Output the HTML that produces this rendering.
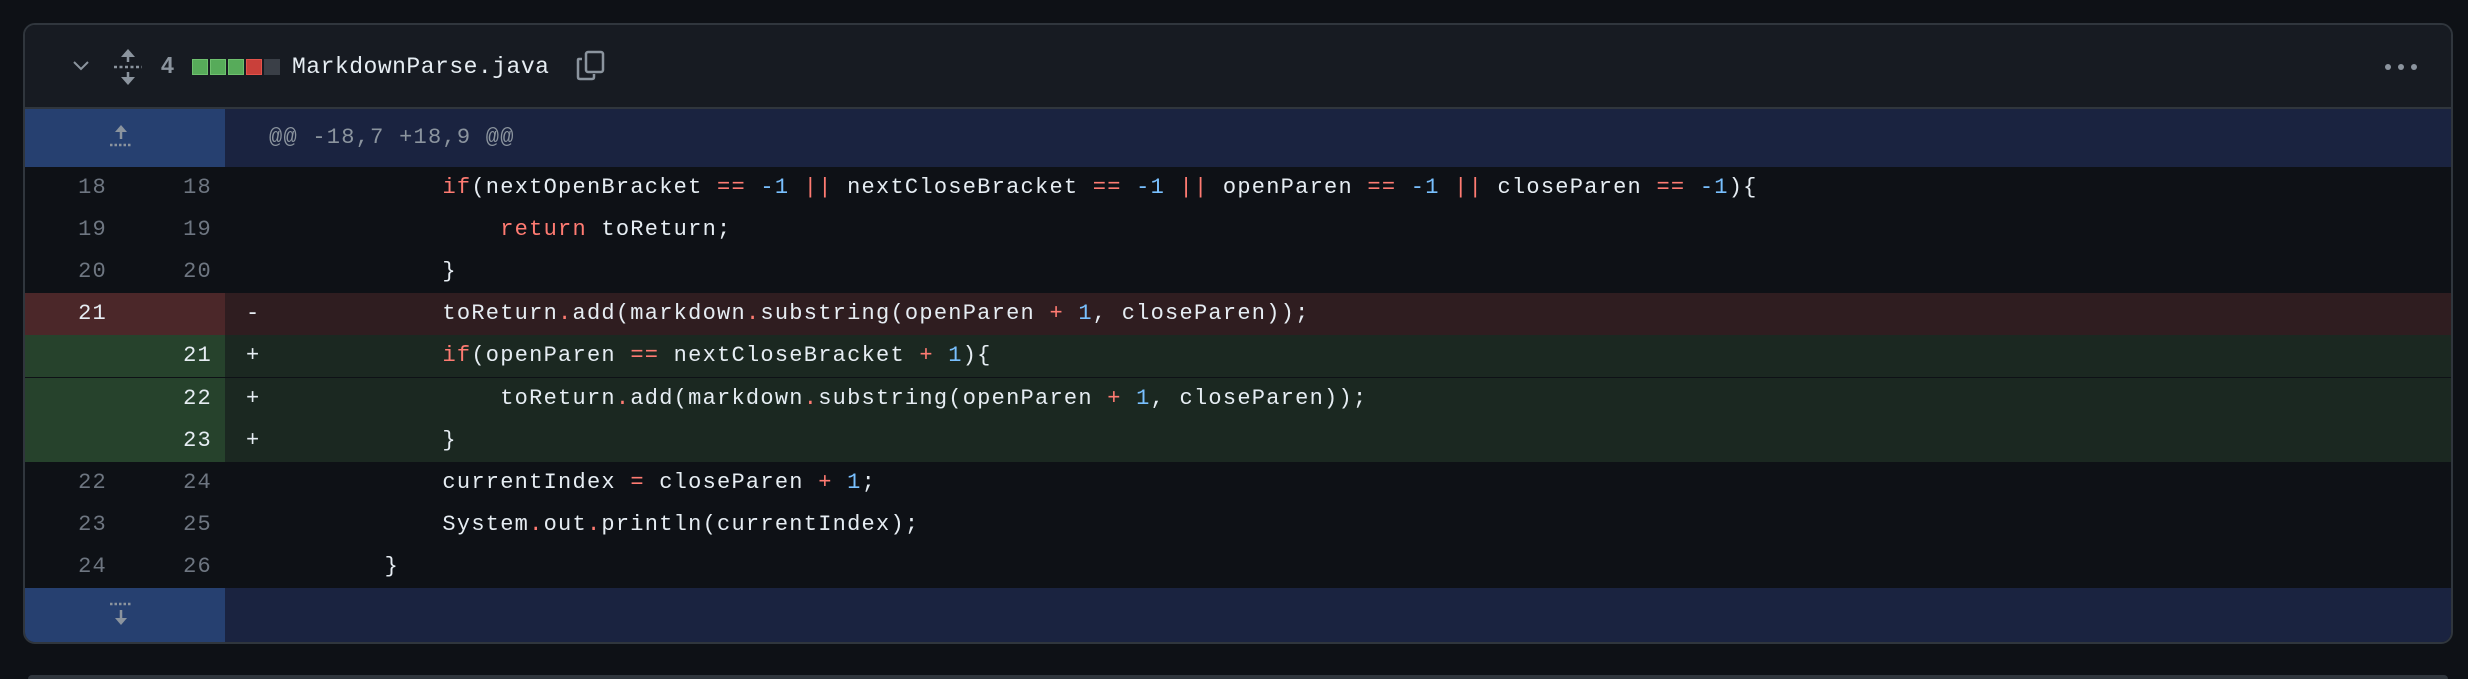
<!DOCTYPE html>
<html><head><meta charset="utf-8"><style>
*{margin:0;padding:0;box-sizing:border-box}
body{width:2468px;height:678px;background:#0e1116;position:relative;overflow:hidden;font-family:"Liberation Mono",monospace}
.box{position:absolute;left:23px;top:23px;width:2430px;height:621px;border:2px solid #30363d;border-radius:12px;overflow:hidden;background:#0e1116}
.hdr{position:absolute;left:0;top:0;width:100%;height:84px;background:#171b22;border-bottom:2px solid #30363d}
.hunk{position:absolute;left:0;height:58px;width:100%;background:#1a2340}
.hunk .n{position:absolute;left:0;top:0;width:200px;height:100%;background:#264070}
.row{position:absolute;left:0;width:100%;height:42.1px;font-size:22px;letter-spacing:1.25px;color:#e6edf3;line-height:42px;white-space:pre}
.row .o,.row .w{position:absolute;top:0;text-align:right;color:#6e7681}
.row .o{left:0;width:82px}.row .w{left:100px;width:87px}
.row .s{position:absolute;left:221px}
.row .c{position:absolute;left:244px}
.del{background:#2f1d20}.del .nb{position:absolute;left:0;top:0;width:200px;height:100%;background:#4b2729}
.add{background:#1b2821}.add .nb{position:absolute;left:0;top:0;width:200px;height:100%;background:#26422c}
.del .o,.del .w,.add .o,.add .w{color:#e6edf3}
.k{color:#ff7b72}.b{color:#79c0ff}
.sq{position:absolute;top:34px;width:16px;height:16px}
.dot{position:absolute;top:39px;width:6px;height:6px;border-radius:50%;background:#8b949e}
</style></head><body>
<div class="box">
 <div class="hdr">
  <svg style="position:absolute;left:46px;top:34px" width="20" height="14" viewBox="0 0 20 14"><path d="M3 3 L10 10 L17 3" fill="none" stroke="#8b949e" stroke-width="2"/></svg>
  <svg style="position:absolute;left:88px;top:22px" width="30" height="40" viewBox="0 0 30 40"><path d="M15 2 L8 10 H22 Z M15 38 L8 30 H22 Z" fill="#8b949e"/><path d="M15 8 V15 M15 25 V32" stroke="#8b949e" stroke-width="2.5"/><path d="M1 20 H29" stroke="#8b949e" stroke-width="2.5" stroke-dasharray="3 2.5"/></svg>
  <div style="position:absolute;left:136px;top:27px;font:bold 23px 'Liberation Sans',sans-serif;color:#8b949e">4</div>
  <div class="sq" style="left:167px;background:#57ab5a;border:1px solid #6fc16f"></div>
  <div class="sq" style="left:185px;background:#57ab5a;border:1px solid #6fc16f"></div>
  <div class="sq" style="left:203px;background:#57ab5a;border:1px solid #6fc16f"></div>
  <div class="sq" style="left:221px;background:#c9403a;border:1px solid #e5534b"></div>
  <div class="sq" style="left:239px;background:#3a3f47"></div>
  <div style="position:absolute;left:267px;top:29px;font-size:23px;color:#e6edf3;letter-spacing:0.5px">MarkdownParse.java</div>
  <svg style="position:absolute;left:551px;top:24px" width="30" height="32" viewBox="0 0 30 32"><path d="M6 10 H3 Q2 10 2 11 V28 Q2 30 4 30 H16 Q18 30 18 28 V25" fill="none" stroke="#8b949e" stroke-width="2.5"/><rect x="10" y="3" width="17" height="20" rx="2" fill="none" stroke="#8b949e" stroke-width="2.5"/></svg>
  <div class="dot" style="left:2360px"></div>
  <div class="dot" style="left:2373px"></div>
  <div class="dot" style="left:2386px"></div>
 </div>
 <div class="hunk" style="top:84px"><div class="n"><svg style="position:absolute;left:84px;top:12px" width="24" height="30" viewBox="0 0 24 30"><path d="M12 4 L6 11 H18 Z" fill="#8b949e"/><path d="M12 10 V18" stroke="#8b949e" stroke-width="2.5"/><path d="M1 24 H23" stroke="#8b949e" stroke-width="2.5" stroke-dasharray="2.5 2"/></svg></div>
  <div style="position:absolute;left:244px;top:0;line-height:58px;font-size:22px;letter-spacing:1.25px;color:#8b949e">@@ -18,7 +18,9 @@</div></div>
 <div class="row" style="top:142px"><span class="o">18</span><span class="w">18</span><span class="c">            <span class="k">if</span>(nextOpenBracket <span class="k">==</span> <span class="b">-1</span> <span class="k">||</span> nextCloseBracket <span class="k">==</span> <span class="b">-1</span> <span class="k">||</span> openParen <span class="k">==</span> <span class="b">-1</span> <span class="k">||</span> closeParen <span class="k">==</span> <span class="b">-1</span>){</span></div>
 <div class="row" style="top:184.1px"><span class="o">19</span><span class="w">19</span><span class="c">                <span class="k">return</span> toReturn;</span></div>
 <div class="row" style="top:226.2px"><span class="o">20</span><span class="w">20</span><span class="c">            }</span></div>
 <div class="row del" style="top:268.3px"><span class="nb"></span><span class="o">21</span><span class="s">-</span><span class="c">            toReturn<span class="k">.</span>add(markdown<span class="k">.</span>substring(openParen <span class="k">+</span> <span class="b">1</span>, closeParen));</span></div>
 <div class="row add" style="top:310.4px"><span class="nb"></span><span class="w">21</span><span class="s">+</span><span class="c">            <span class="k">if</span>(openParen <span class="k">==</span> nextCloseBracket <span class="k">+</span> <span class="b">1</span>){</span></div>
 <div class="row add" style="top:352.5px"><span class="nb"></span><span class="w">22</span><span class="s">+</span><span class="c">                toReturn<span class="k">.</span>add(markdown<span class="k">.</span>substring(openParen <span class="k">+</span> <span class="b">1</span>, closeParen));</span></div>
 <div class="row add" style="top:394.6px"><span class="nb"></span><span class="w">23</span><span class="s">+</span><span class="c">            }</span></div>
 <div class="row" style="top:436.7px"><span class="o">22</span><span class="w">24</span><span class="c">            currentIndex <span class="k">=</span> closeParen <span class="k">+</span> <span class="b">1</span>;</span></div>
 <div class="row" style="top:478.8px"><span class="o">23</span><span class="w">25</span><span class="c">            System<span class="k">.</span>out<span class="k">.</span>println(currentIndex);</span></div>
 <div class="row" style="top:520.9px"><span class="o">24</span><span class="w">26</span><span class="c">        }</span></div>
 <div class="hunk" style="top:563px;height:56px"><div class="n"><svg style="position:absolute;left:84px;top:12px" width="24" height="30" viewBox="0 0 24 30"><path d="M1 4 H23" stroke="#8b949e" stroke-width="2.5" stroke-dasharray="2.5 2"/><path d="M12 10 V18" stroke="#8b949e" stroke-width="2.5"/><path d="M12 25 L6 18 H18 Z" fill="#8b949e"/></svg></div></div>
</div>
<div style="position:absolute;left:28px;top:675px;width:2420px;height:4px;background:#30363d;border-radius:4px 4px 0 0"></div>
</body></html>
